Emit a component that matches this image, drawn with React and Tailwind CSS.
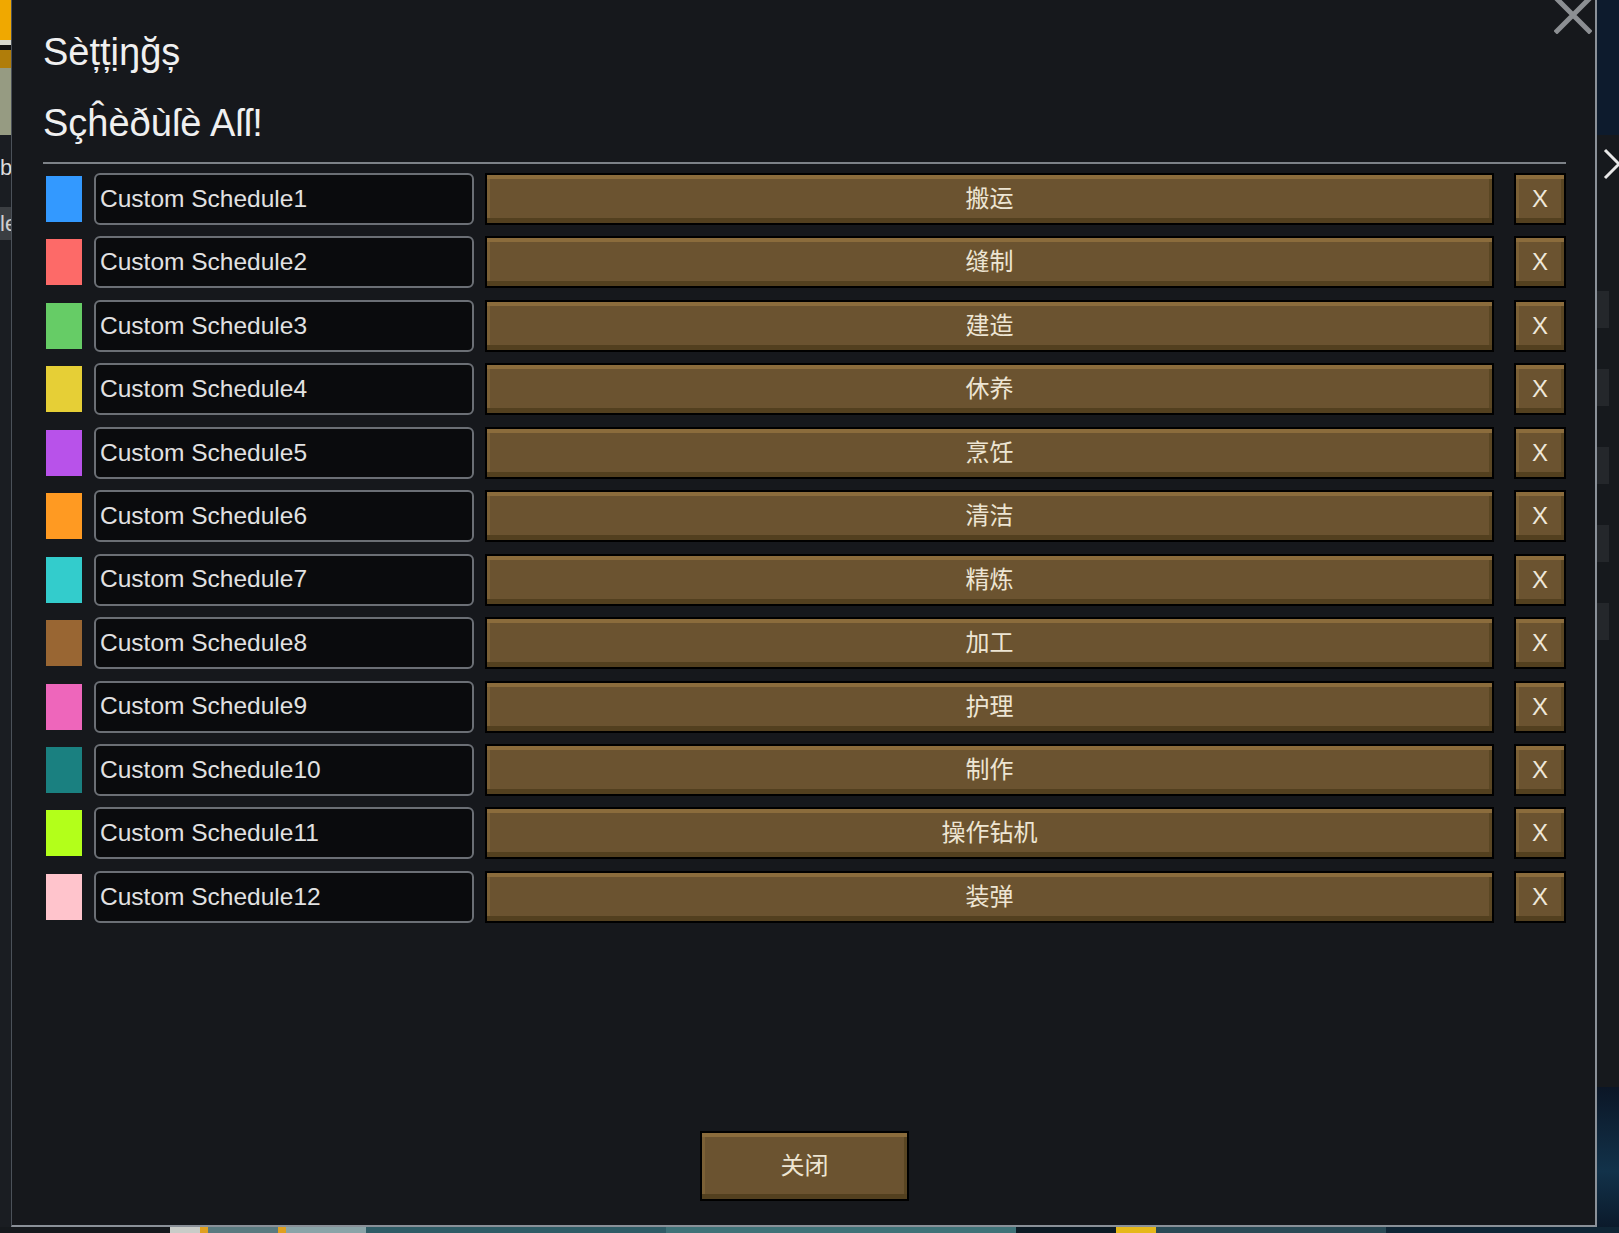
import React from 'react';

const schedules = [
    { name: 'Custom Schedule1', color: 'bg-[#3399ff]', job: '搬运' },
    { name: 'Custom Schedule2', color: 'bg-[#fd6a68]', job: '缝制' },
    { name: 'Custom Schedule3', color: 'bg-[#66cc66]', job: '建造' },
    { name: 'Custom Schedule4', color: 'bg-[#e6cf36]', job: '休养' },
    { name: 'Custom Schedule5', color: 'bg-[#b852ea]', job: '烹饪' },
    { name: 'Custom Schedule6', color: 'bg-[#ff9a22]', job: '清洁' },
    { name: 'Custom Schedule7', color: 'bg-[#33cccc]', job: '精炼' },
    { name: 'Custom Schedule8', color: 'bg-[#996633]', job: '加工' },
    { name: 'Custom Schedule9', color: 'bg-[#ee66bb]', job: '护理' },
    { name: 'Custom Schedule10', color: 'bg-[#1a8080]', job: '制作' },
    { name: 'Custom Schedule11', color: 'bg-[#b3ff1a]', job: '操作钻机' },
    { name: 'Custom Schedule12', color: 'bg-[#ffc4cc]', job: '装弹' },
];

const font = "font-['Liberation_Sans','Noto_Sans_CJK_SC',sans-serif]";
const bevel = 'border-2 border-black bg-[#6b5330] shadow-[inset_0_4px_0_#8b6c3c,inset_0_-5px_0_#53401f,inset_-3px_0_0_#5a4623,inset_3px_0_0_#7b6036]';

function Row({ s }) {
    return (
        <div className="flex items-center h-[52px]">
            <div className={`ml-[3px] w-[36px] h-[46px] shrink-0 ${s.color}`} />
            <div className="ml-[12px] w-[380px] h-[52px] shrink-0 rounded-[6px] border-2 border-[#6b6f75] bg-[#0a0b0d] flex items-center pl-[4px]">
                <span className="text-[24.5px] leading-none text-[#e2e2e2]">{s.name}</span>
            </div>
            <button className={`ml-[11px] flex-1 h-[52px] ${bevel} flex items-center justify-center`}>
                <span className="text-[24px] leading-none text-[#ede5d3]">{s.job}</span>
            </button>
            <button className={`ml-[20px] w-[52px] h-[52px] shrink-0 ${bevel} flex items-center justify-center`}>
                <span className="text-[24px] leading-none text-[#efe8da]">X</span>
            </button>
        </div>
    );
}

export default function App() {
    return (
        <div className={`w-[1619px] h-[1233px] overflow-hidden bg-[#0d1826] flex flex-col ${font}`}>
            <div className="flex h-[1227px]">
                {/* left game strip */}
                <div className="w-[11px] shrink-0 flex flex-col bg-[#1a1d22]">
                    <div className="h-[40px] bg-[#f0a800]" />
                    <div className="h-[5px] bg-[#d8d8cc]" />
                    <div className="h-[5px] bg-[#111]" />
                    <div className="h-[18px] bg-[#b07d0a]" />
                    <div className="h-[67px] bg-[#969b82]" />
                    <div className="h-[22px]" />
                    <div className="h-[22px] text-[22px] leading-none text-[#dcdcdc] overflow-hidden">b</div>
                    <div className="h-[33px] mt-[28px] bg-[#3b3e42] text-[22px] leading-[33px] text-[#d0d0d0] overflow-hidden">le</div>
                </div>

                {/* dialog */}
                <div className="relative w-[1586px] shrink-0 bg-[#16181c] border-l border-l-[#4b5159] border-r-2 border-r-[#8a9098] border-b-2 border-b-[#8a9098] pl-[31px] pr-[29px] pt-[33px] pb-[24px] flex flex-col">
                    <svg className="absolute right-[3px] top-[-4px]" width="38" height="38" viewBox="0 0 38 38">
                        <path d="M3 3 L35 35 M35 3 L3 35" stroke="#8c8f93" strokeWidth="5" strokeLinecap="square" />
                    </svg>
                    <h1 className="text-[38px] leading-none h-[38px] text-[#f0f0f0]">Sèțțịŋğș</h1>
                    <h2 className="mt-[33px] text-[38px] leading-none h-[37px] text-[#f0f0f0]">Sçĥèðùſè Aſſ!</h2>
                    <div className="mt-[21px] h-[2px] bg-[#7d8288]" />
                    <div className="mt-[9px] flex flex-col gap-[11.45px]">
                        {schedules.map(s => <Row key={s.name} s={s} />)}
                    </div>
                    <div className="flex-1" />
                    <div className="flex justify-center">
                        <button className={`w-[209px] h-[70px] ${bevel} flex items-center justify-center`}>
                            <span className="text-[24px] leading-none text-[#ede5d3]">关闭</span>
                        </button>
                    </div>
                </div>

                {/* right game strip */}
                <div className="w-[22px] shrink-0 flex flex-col">
                    <div className="h-[135px] bg-[#0d1b2d]" />
                    <div className="flex-1 bg-[#16191d] relative">
                        <svg className="absolute left-[6px] top-[12px]" width="16" height="34" viewBox="0 0 16 34">
                            <path d="M2 3 L16 17 L2 31" stroke="#e8e8e8" strokeWidth="3" fill="none" />
                        </svg>
                        <div className="flex flex-col gap-[41px] pt-[156px]">
                            <div className="w-[12px] h-[37px] bg-[#24272b]" />
                            <div className="w-[12px] h-[37px] bg-[#24272b]" />
                            <div className="w-[12px] h-[37px] bg-[#24272b]" />
                            <div className="w-[12px] h-[37px] bg-[#24272b]" />
                            <div className="w-[12px] h-[37px] bg-[#24272b]" />
                        </div>
                    </div>
                    <div className="h-[140px] bg-[linear-gradient(180deg,#0b1626,#12324a_60%,#0b1a2b)]" />
                </div>
            </div>

            {/* bottom game strip */}
            <div className="flex h-[6px]">
                <div className="w-[170px] bg-[#16191d]" />
                <div className="w-[30px] bg-[#c9ccc8]" />
                <div className="w-[8px] bg-[#e0a020]" />
                <div className="w-[70px] bg-[#5a7a80]" />
                <div className="w-[8px] bg-[#e0a020]" />
                <div className="w-[80px] bg-[#8aa4a8]" />
                <div className="w-[300px] bg-[#2f5c66]" />
                <div className="w-[350px] bg-[#3f7278]" />
                <div className="w-[100px] bg-[#0c1a24]" />
                <div className="w-[40px] bg-[#e6b81a]" />
                <div className="w-[230px] bg-[#2a4a56]" />
                <div className="flex-1 bg-[#0f2535]" />
            </div>
        </div>
    );
}
